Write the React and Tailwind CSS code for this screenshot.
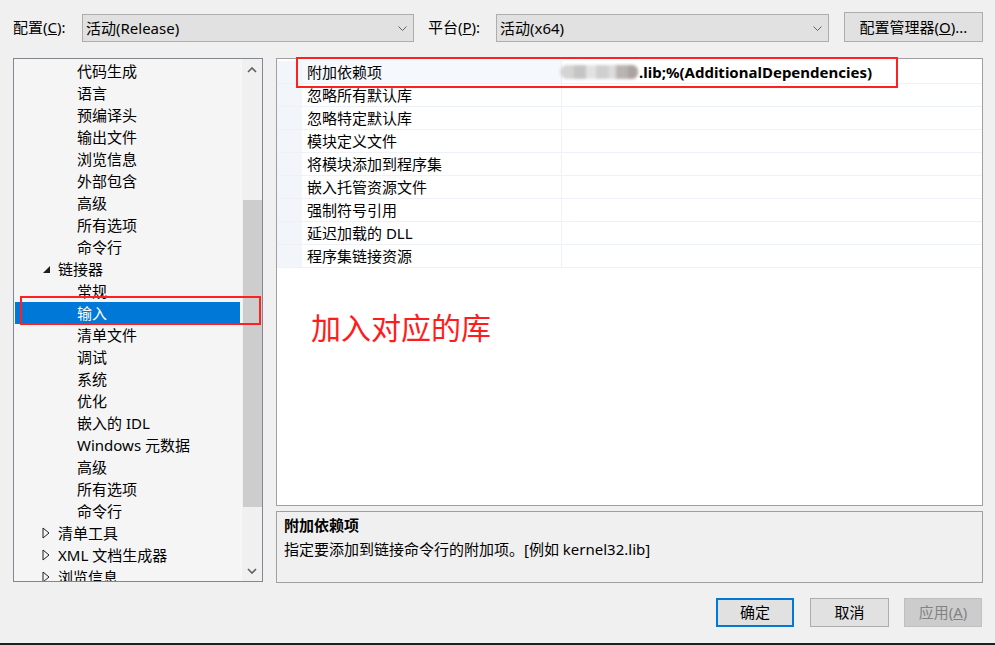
import React from 'react';

const treeItems = [
  { label: '代码生成', level: 2 },
  { label: '语言', level: 2 },
  { label: '预编译头', level: 2 },
  { label: '输出文件', level: 2 },
  { label: '浏览信息', level: 2 },
  { label: '外部包含', level: 2 },
  { label: '高级', level: 2 },
  { label: '所有选项', level: 2 },
  { label: '命令行', level: 2 },
  { label: '链接器', level: 1, open: true },
  { label: '常规', level: 2 },
  { label: '输入', level: 2, selected: true },
  { label: '清单文件', level: 2 },
  { label: '调试', level: 2 },
  { label: '系统', level: 2 },
  { label: '优化', level: 2 },
  { label: '嵌入的 IDL', level: 2 },
  { label: 'Windows 元数据', level: 2 },
  { label: '高级', level: 2 },
  { label: '所有选项', level: 2 },
  { label: '命令行', level: 2 },
  { label: '清单工具', level: 1 },
  { label: 'XML 文档生成器', level: 1 },
  { label: '浏览信息', level: 1 },
];

const props = [
  '附加依赖项',
  '忽略所有默认库',
  '忽略特定默认库',
  '模块定义文件',
  '将模块添加到程序集',
  '嵌入托管资源文件',
  '强制符号引用',
  '延迟加载的 DLL',
  '程序集链接资源',
];

function Chevron({ up = false, className = '' }) {
  return (
    <svg width="10" height="6" viewBox="0 0 10 6" className={className}>
      <polyline
        points={up ? '1,5 5,1 9,5' : '1,1 5,5 9,1'}
        fill="none"
        stroke="currentColor"
        strokeWidth="1.6"
      />
    </svg>
  );
}

function Select({ value, width }) {
  return (
    <div
      className={`${width} h-[28px] mt-[2px] border border-[#adadad] bg-[#e1e1e1] flex items-center justify-between pl-[3px] pr-[6px]`}
    >
      <span>{value}</span>
      <svg width="9" height="5" viewBox="0 0 9 5" className="text-[#606060]">
        <polyline points="0.5,0.5 4.5,4.5 8.5,0.5" fill="none" stroke="currentColor" strokeWidth="1" />
      </svg>
    </div>
  );
}

function TreeRow({ item }) {
  return (
    <div
      className={`h-[22px] leading-[22px] whitespace-nowrap flex items-center ${
        item.selected ? 'bg-[#0078d7] text-white ml-[1px] mr-[1px]' : ''
      }`}
    >
      {item.level === 2 ? (
        <span className={item.selected ? 'pl-[62px]' : 'pl-[63px]'}>{item.label}</span>
      ) : (
        <>
          <span className="w-[28px]" />
          <span className="w-[16px] flex items-center">
            {item.open ? (
              <svg width="9" height="9" viewBox="0 0 9 9">
                <polygon points="8,1 8,8 1,8" fill="#1e1e1e" />
              </svg>
            ) : (
              <svg width="8" height="12" viewBox="0 0 8 12">
                <polygon points="1,1 7,6 1,11" fill="none" stroke="#1e1e1e" strokeWidth="1" />
              </svg>
            )}
          </span>
          <span>{item.label}</span>
        </>
      )}
    </div>
  );
}

function Blurred() {
  return (
    <div className="flex items-center h-[16px] blur-[1.5px] mr-[1px] -ml-[2px]">
      <span className="w-[14px] h-[14px] bg-[#d4d4d4] rounded-l-full" />
      <span className="w-[12px] h-[14px] bg-[#c4c4c4]" />
      <span className="w-[10px] h-[14px] bg-[#e2e2e2]" />
      <span className="w-[12px] h-[14px] bg-[#cfcfcf]" />
      <span className="w-[8px] h-[14px] bg-[#dcdcdc]" />
      <span className="w-[12px] h-[14px] bg-[#b9b4b2]" />
      <span className="w-[10px] h-[14px] bg-[#aaa3a0] rounded-r-md" />
    </div>
  );
}

export default function App() {
  return (
    <div className="relative w-[995px] h-[645px] overflow-hidden bg-[#f0f0f0] flex flex-col text-[15px] text-black font-['Noto_Sans','Noto_Sans_CJK_SC',sans-serif]">
      {/* top bar */}
      <div className="flex items-center h-[30px] mt-[12px] pl-[13px]">
        <span className="w-[69px]">
          配置(<span className="underline">C</span>):
        </span>
        <Select value="活动(Release)" width="w-[332px]" />
        <span className="ml-[14px] w-[68px]">
          平台(<span className="underline">P</span>):
        </span>
        <Select value="活动(x64)" width="w-[333px]" />
        <div className="ml-[15px] w-[139px] h-[30px] border border-[#adadad] bg-[#e1e1e1] flex items-center justify-center">
          配置管理器(<span className="underline">O</span>)...
        </div>
      </div>

      {/* main */}
      <div className="flex mt-[16px] pl-[13px]">
        {/* tree */}
        <div className="w-[250px] h-[524px] border border-[#828790] bg-[#f5f5f5] flex overflow-hidden">
          <div className="flex-1 pt-[1px] overflow-hidden">
            {treeItems.map((item, i) => (
              <TreeRow key={i} item={item} />
            ))}
          </div>
          <div className="w-[21px] bg-[#f0f0f0] flex flex-col items-center border-l border-[#f8f8f8]">
            <div className="h-[21px] flex items-center justify-center text-[#606060]">
              <Chevron up />
            </div>
            <div className="mt-[120px] h-[307px] w-[19px] bg-[#cdcdcd]" />
            <div className="flex-1" />
            <div className="h-[21px] flex items-center justify-center text-[#606060]">
              <Chevron />
            </div>
          </div>
        </div>

        {/* right */}
        <div className="ml-[13px] w-[707px] flex flex-col">
          <div className="h-[448px] border border-[#a0a0a0] bg-white pt-[2px]">
            {props.map((name, i) => (
              <div key={name} className="flex h-[23px] leading-[22px]">
                <div className="w-[25px] bg-[#f2f5fa] border-b border-[#eef2f8]" />
                <div
                  className={`w-[260px] pl-[5px] border-b border-r border-[#eef2f8] whitespace-nowrap ${
                    i === 0 ? 'bg-[#f5f8fc]' : ''
                  }`}
                >
                  {name}
                </div>
                <div className="flex-1 border-b border-[#eef2f8] flex items-center whitespace-nowrap">
                  {i === 0 && (
                    <>
                      <Blurred />
                      <span className="font-bold">.lib;%(AdditionalDependencies)</span>
                    </>
                  )}
                </div>
              </div>
            ))}
          </div>
          <div className="mt-[5px] h-[72px] border border-[#a0a0a0] bg-[#f0f0f0] pl-[7px] pt-[1px] leading-[24px]">
            <div className="font-bold">附加依赖项</div>
            <div>指定要添加到链接命令行的附加项。[例如 kernel32.lib]</div>
          </div>
        </div>
      </div>

      {/* buttons */}
      <div className="flex justify-end mt-[15px] pr-[13px]">
        <div className="w-[78px] h-[29px] border-2 border-[#0078d7] bg-[#e1e1e1] flex items-center justify-center">
          确定
        </div>
        <div className="ml-[16px] w-[79px] h-[29px] border border-[#adadad] bg-[#e1e1e1] flex items-center justify-center">
          取消
        </div>
        <div className="ml-[15px] w-[78px] h-[29px] border border-[#bfbfbf] bg-[#cccccc] text-[#838383] flex items-center justify-center">
          应用(<span className="underline">A</span>)
        </div>
      </div>

      <div className="flex-1" />
      <div className="h-[2px] bg-[#1f1f1f]" />

      {/* annotations */}
      <div className="absolute left-[296px] top-[57px] w-[602px] h-[31px] border-2 border-[#ff2020]" />
      <div className="absolute left-[20px] top-[296px] w-[241px] h-[29px] border-2 border-[#ff2020]" />
      <div className="absolute left-[311px] top-[308px] text-[30px] leading-[36px] text-[#ff1c1c] font-['Noto_Sans_CJK_SC',sans-serif] font-normal">
        加入对应的库
      </div>
    </div>
  );
}
